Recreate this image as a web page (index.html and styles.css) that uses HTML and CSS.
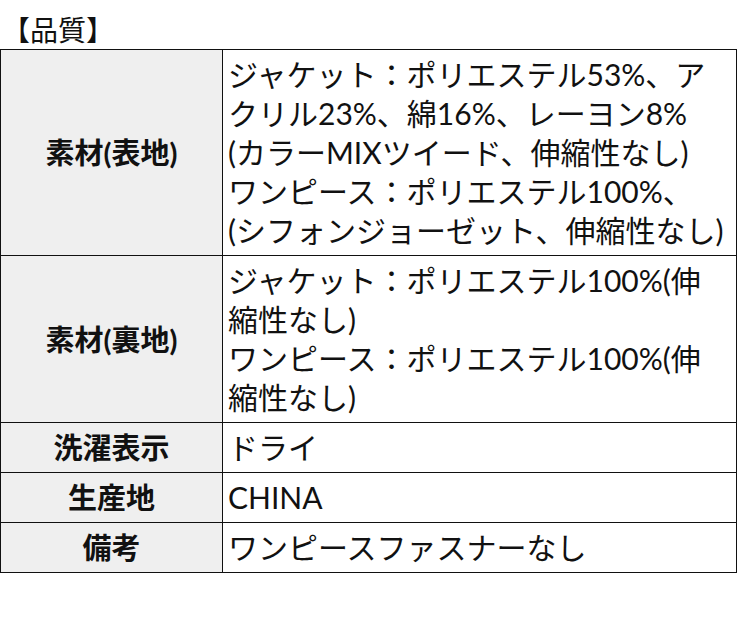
FILE: index.html
```html
<!DOCTYPE html>
<html lang="ja">
<head>
<meta charset="utf-8">
<link rel="stylesheet" href="styles.css">
</head>
<body>
<div class="page">
  <h2 class="title">【品質】</h2>
  <table class="spec">
    <colgroup>
      <col class="col-head">
      <col class="col-body">
    </colgroup>
    <tr>
      <th>素材(表地)</th>
      <td>ジャケット：ポリエステル53%、アクリル23%、綿16%、レーヨン8%<br>(カラーMIXツイード、伸縮性なし)<br>ワンピース：ポリエステル100%、<br>(シフォンジョーゼット、伸縮性なし)</td>
    </tr>
    <tr>
      <th>素材(裏地)</th>
      <td>ジャケット：ポリエステル100%(伸縮性なし)<br>ワンピース：ポリエステル100%(伸縮性なし)</td>
    </tr>
    <tr>
      <th>洗濯表示</th>
      <td>ドライ</td>
    </tr>
    <tr>
      <th>生産地</th>
      <td>CHINA</td>
    </tr>
    <tr>
      <th>備考</th>
      <td>ワンピースファスナーなし</td>
    </tr>
  </table>
</div>
</body>
</html>
```
FILE: styles.css
```css
html, body {
  margin: 0;
  padding: 0;
  background: #fff;
}
body {
  font-family: "Lato", "Noto Sans CJK JP", sans-serif;
  color: #111;
}
.page {
  width: 740px;
}
.title {
  margin: 0;
  padding: 11px 0 0 2px;
  height: 38px;
  box-sizing: content-box;
  font-size: 28px;
  font-weight: 400;
  line-height: 38px;
}
.spec {
  width: 737px;
  border-collapse: collapse;
  table-layout: fixed;
}
.col-head {
  width: 222px;
}
.spec th,
.spec td {
  border: 1.5px solid #111;
  font-size: 30px;
  line-height: 39px;
}
.spec th {
  background: #efefef;
  font-weight: 700;
  font-size: 29px;
  text-align: center;
  vertical-align: middle;
  padding: 5px 2px;
}
.spec td {
  text-align: left;
  padding: 5px 11px 5px 5px;
  vertical-align: middle;
}
```
